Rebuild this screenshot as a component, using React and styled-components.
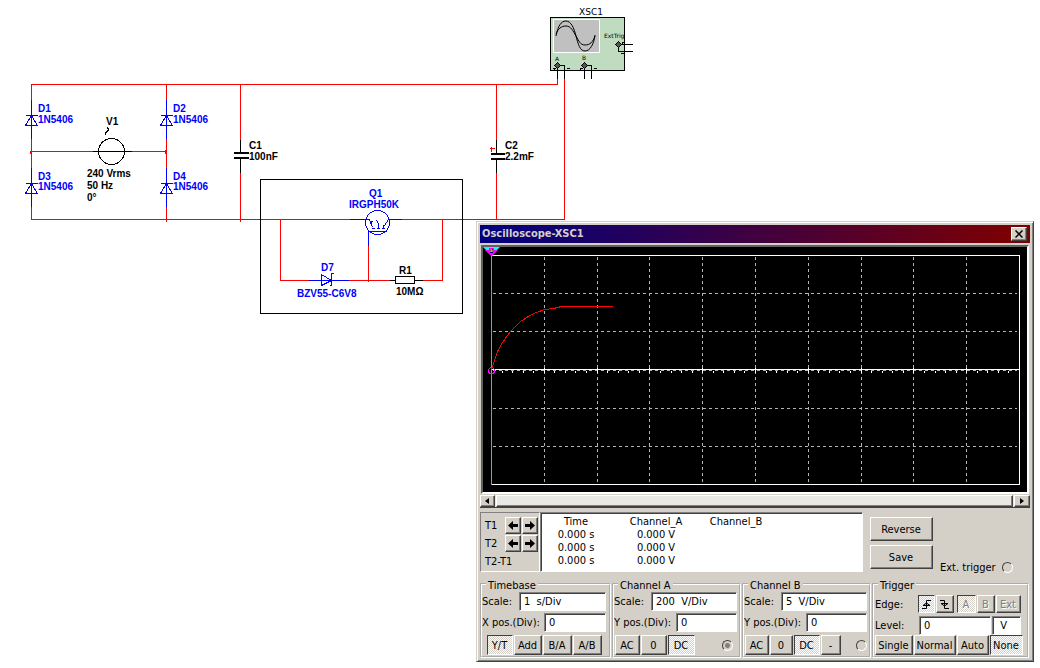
import React from "react";
import styled, { createGlobalStyle, css } from "styled-components";

const FACE = "#d4d0c8";
const RED = "#ff0000";
const BLUE = "#0000ff";

const GlobalStyle = createGlobalStyle`
  * { box-sizing: border-box; }
  body {
    margin: 0;
    background: #fff;
    color: #000;
    font-family: "DejaVu Sans Condensed", "DejaVu Sans", sans-serif;
    font-size: 11px;
    line-height: 13px;
  }
`;

const raised = css`
  border: 1px solid;
  border-color: #fff #404040 #404040 #fff;
  box-shadow: inset -1px -1px #808080;
`;

const sunken = css`
  border: 1px solid;
  border-color: #808080 #fff #fff #808080;
  box-shadow: inset 1px 1px #404040;
`;

const Desktop = styled.main`
  position: relative;
  min-height: 100vh;
`;

const Schematic = styled.svg`
  display: block;
  width: 100%;
  height: 320px;
  text {
    font: bold 10px "Liberation Sans", Arial, sans-serif;
  }
  .blue { fill: ${BLUE}; }
  .name { font: 9px "DejaVu Sans", sans-serif; }
  .tiny { font: 6px "DejaVu Sans", sans-serif; }
`;

const Window = styled.section`
  position: absolute;
  top: 221px;
  left: 476px;
  right: 6px;
  min-width: 556px;
  padding: 3px;
  background: ${FACE};
  border: 1px solid;
  border-color: ${FACE} #404040 #404040 ${FACE};
  box-shadow: inset 1px 1px #fff, inset -1px -1px #808080;
`;

const TitleBar = styled.header`
  display: flex;
  align-items: center;
  justify-content: space-between;
  height: 18px;
  padding: 0 3px 0 2px;
  background: linear-gradient(to right, #000080, #800000);
  color: ${FACE};
`;

const Title = styled.h1`
  margin: 0;
  font-size: 11px;
  line-height: 18px;
`;

const Button = styled.button`
  display: flex;
  align-items: center;
  justify-content: center;
  width: ${(p) => p.$w}px;
  height: ${(p) => p.$h || 20}px;
  padding: 0 1px 0 0;
  background: ${FACE};
  color: #000;
  font: inherit;
  ${raised}
  ${(p) =>
    p.$pressed &&
    css`
      border-color: #404040 #fff #fff #404040;
      box-shadow: none;
      background: repeating-conic-gradient(#fff 0 25%, ${FACE} 0 50%) 0 0 / 2px 2px;
    `}
  &:disabled {
    color: #808080;
    text-shadow: 1px 1px #fff;
  }
`;

const Display = styled.div`
  margin: 2px 1px 0;
  border: 2px solid;
  border-color: #606060 #fff #fff #606060;
  background: #000;
`;

const Graph = styled.svg`
  display: block;
  width: 100%;
`;

const ScrollBar = styled.div`
  display: flex;
  height: 13px;
  margin-top: 1px;
  background: #eae8e3;
  border-bottom: 1px solid #404040;
`;

const Thumb = styled.div`
  flex: 1;
  margin: 0 1px;
  ${raised}
`;

const Readout = styled.div`
  display: flex;
  height: 60px;
  margin-top: 4px;
`;

const Cursors = styled.div`
  display: grid;
  grid-template-columns: 19px 16px 16px;
  grid-template-rows: 17px 17px 16px;
  column-gap: 1px;
  row-gap: 1px;
  flex: 0 0 60px;
  padding: 4px 0 0 4px;
  border: 1px solid;
  border-color: #808080 #fff #fff #808080;
`;

const CursorName = styled.span`
  align-self: center;
  white-space: nowrap;
`;

const Listing = styled.div`
  flex: 0 1 323px;
  padding: 2px 1px 1px;
  background: #fff;
  ${sunken}
`;

const Values = styled.table`
  table-layout: fixed;
  border-collapse: collapse;
  th, td {
    padding: 0;
    height: 13px;
    font-weight: normal;
    text-align: center;
  }
`;

const Col = styled.col`
  width: ${(p) => p.$w}px;
`;

const Actions = styled.div`
  display: flex;
  flex-direction: column;
  gap: 4px;
  padding: 5px 7px 0;
`;

const RadioLabel = styled.label`
  display: flex;
  align-items: center;
  align-self: flex-end;
  gap: 6px;
  height: 10px;
`;

const Radio = styled.input`
  appearance: none;
  width: 11px;
  height: 11px;
  margin: 0;
  border: 1px solid;
  border-color: #404040 #fff #fff #404040;
  border-radius: 50%;
  background: ${FACE};
  &:checked {
    background: radial-gradient(#808080 0 2px, ${FACE} 3px);
  }
`;

const Groups = styled.div`
  display: grid;
  grid-template-columns: 131fr 129fr 129fr 157fr;
  column-gap: 1px;
  margin: 4px 1px 0 0;
`;

const Group = styled.fieldset`
  min-width: 0;
  margin: 0;
  padding: 0 2px 1px 0;
  border: 2px groove #fff;
`;

const Legend = styled.legend`
  margin-left: 4px;
  padding: 4px 2px 0;
  line-height: 12px;
`;

const Rows = styled.div`
  display: flex;
  flex-direction: column;
  gap: ${(p) => (p.$trigger ? 0 : 2)}px;
`;

const FieldRow = styled.div`
  display: flex;
  align-items: center;
  justify-content: space-between;
  padding-left: ${(p) => p.$indent || 0}px;
  padding-right: ${(p) => p.$inset || 0}px;
`;

const EdgeRow = styled(FieldRow)`
  height: 24px;
`;

const Name = styled.label`
  flex: 1;
  white-space: nowrap;
`;

const TextBox = styled.input`
  width: ${(p) => p.$w}px;
  height: 19px;
  padding: 0 4px;
  border-radius: 0;
  background: #fff;
  color: #000;
  font: inherit;
  ${sunken}
`;

const ButtonRow = styled.div`
  display: flex;
  gap: 1px;
  padding-left: ${(p) => p.$indent}px;
  margin-top: ${(p) => (p.$flush ? 0 : 1)}px;
`;

const Pair = styled.div`
  display: flex;
  gap: 1px;
  margin-right: ${(p) => p.$after || 0}px;
`;

const RadioSlot = styled.div`
  display: flex;
  align-items: center;
  margin-left: auto;
  padding-right: ${(p) => p.$inset || 0}px;
`;

function Diode({ x, y }) {
  return (
    <path
      d={`M${x} ${y - 16}V${y + 23}M${x - 6} ${y}H${x + 6}M${x} ${y}L${x - 6} ${y + 10}H${x + 6}Z`}
      stroke={BLUE}
    />
  );
}

function Terminal({ x, y }) {
  return (
    <path d={`M${x - 3} ${y}L${x} ${y - 3}L${x + 3} ${y}L${x} ${y + 3}Z`} fill="#555" stroke="#000" />
  );
}

function Circuit() {
  return (
    <Schematic role="img" aria-label="Rectifier circuit with oscilloscope XSC1">
      <g transform="translate(.5 .5)" fill="none" strokeWidth="1" shapeRendering="crispEdges">
        <rect x="550" y="17" width="74" height="53" fill="#c0dcc0" stroke="#000" />
        <rect x="553" y="19" width="46" height="33" fill="#c0c0c0" stroke="#fff" />
        <g stroke={RED}>
          <path d="M31 219V84H557V78M564 78V219H31M166 84V219M240 84V219M496 84V219M31 151H166" />
          <path d="M280 219V280H442V219M368 244V281" />
          <path d="M165 84H168M166 83V86M239 84H242M240 83V86M165 219H168M166 218V221M239 219H242M240 218V221M30 150V153M29 151H31M165 150V153M164 150H166" />
          <path d="M491 146V151M489 148H494M496 83V85M280 218V220M442 218V220" />
        </g>
        <Diode x={31} y={115} />
        <Diode x={166} y={115} />
        <Diode x={31} y={183} />
        <Diode x={166} y={183} />
        <g stroke="#000">
          <path d="M92 151H131" />
          <circle cx="111" cy="151" r="13" fill="#fff" />
          <path d="M98 151H125" />
          <path d="M107 127L108 129L107 131L105 132V134" />
          <path d="M240 139V152M240 158V172M496 139V152M496 159V172" />
          <rect x="237" y="154" width="6" height="2" fill="#fff" stroke="#fff" />
          <rect x="493" y="155" width="6" height="2" fill="#fff" stroke="#fff" />
          <path d="M233 152H248M233 153H248M233 157H248M233 158H248M490 153H504M490 154H504M490 158H504M490 159H504" />
          <rect x="260" y="179" width="202" height="134" />
          <path d="M389 280H422" />
          <rect x="395" y="276" width="19" height="7" fill="#fff" />
        </g>
        <rect x="370" y="217" width="17" height="4" fill="#fff" stroke="#fff" />
        <g stroke={BLUE}>
          <circle cx="377" cy="222" r="12" />
          <path d="M349 219H369L372 227M401 219H388L382 228M376 220L378 223V227" />
          <path d="M371 228H374M376 228H379M381 228H384M369 221H372M369 220L372 223M383 224V227M367 231H386M368 231V245" />
          <path d="M308 280H348M321 274V285L331 280ZM331 273V285M333 273H331V285H329" />
        </g>
        <g stroke="#000">
          <path d="M557 65V78M557 65H564V78M584 65V78M584 65H591V78M618 44H632M618 44V51H632" />
          <path d="M552 68H555M566 68H569M579 68H582M593 68H596M621 42H624M620 53H623M622 41V43M554 67V69M580 67V69" />
        </g>
        <Terminal x={557} y={65} />
        <Terminal x={584} y={65} />
        <Terminal x={618} y={44} />
      </g>
      <g fill="none" stroke="#000" strokeWidth="1">
        <path d="M556 36C558 26 561 21 566 21S574 28 576 36S580 51 585 51S594 44 595 35" />
        <path d="M556 34C558 29 561 26 566 26S573 31 576 36S580 45 585 45S593 42 595 36" />
      </g>
      <g className="blue">
        <text x="38" y="112">D1</text>
        <text x="38" y="123">1N5406</text>
        <text x="173" y="112">D2</text>
        <text x="173" y="123">1N5406</text>
        <text x="38" y="180">D3</text>
        <text x="38" y="190">1N5406</text>
        <text x="173" y="180">D4</text>
        <text x="173" y="190">1N5406</text>
        <text x="369" y="197">Q1</text>
        <text x="349" y="208">IRGPH50K</text>
        <text x="321" y="271">D7</text>
        <text x="297" y="297">BZV55-C6V8</text>
      </g>
      <text x="106" y="125">V1</text>
      <text x="87" y="177">240 Vrms</text>
      <text x="87" y="189">50 Hz</text>
      <text x="87" y="201">0°</text>
      <text x="249" y="149">C1</text>
      <text x="249" y="160">100nF</text>
      <text x="505" y="149">C2</text>
      <text x="505" y="160">2.2mF</text>
      <text x="399" y="274">R1</text>
      <text x="396" y="295">10MΩ</text>
      <text className="name" x="579" y="15">XSC1</text>
      <text className="tiny" x="604" y="38">ExtTrig</text>
      <text className="tiny" x="555" y="61">A</text>
      <text className="tiny" x="582" y="60">B</text>
    </Schematic>
  );
}

const GRID_X = [61, 114, 166, 219, 272, 325, 378, 430, 483];
const GRID_Y = [46, 84, 123, 161, 199];
const TICKS = Array.from({ length: 50 }, (_, i) => 8 + Math.round(i * 10.56));

function Trace() {
  return (
    <Graph viewBox="0 0 544 245" role="img" aria-label="Channel A trace">
      <g transform="translate(.5 .5)" fill="none" shapeRendering="crispEdges">
        <g stroke="#b4b4b4" strokeDasharray="3 3">
          {GRID_X.map((x) => (
            <path key={x} d={`M${x} 9V237`} />
          ))}
          {GRID_Y.map((y) => (
            <path key={y} d={`M9 ${y}H533`} />
          ))}
        </g>
        <g stroke="#fff">
          <path d="M8 8H536V237H8M8 122H536" />
          {TICKS.map((x) => (
            <path key={x} d={`M${x} 123V125`} />
          ))}
          {GRID_X.map((x) => (
            <path key={x} d={`M${x} 120V125`} />
          ))}
        </g>
        <path d="M8 8V237" stroke="#00ff00" />
        <circle cx="8" cy="123" r="3" stroke="#ff00ff" />
        <path d="M8 122L11 113L14 104L19 95L27 84L37 74L48 67L61 62L70 61L78 59H129" stroke={RED} />
      </g>
      <path d="M0 0H17L14 3H3Z" fill="#00ffff" />
      <path d="M2 3H6V1H11V3H15L9 9H8Z" fill="#ff00ff" />
      <path d="M7 2H10V6H7Z" fill="#000080" />
      <path d="M8 2V5M8 4H10" stroke="#ffff00" />
    </Graph>
  );
}

function Arrow({ flip }) {
  return (
    <svg width="10" height="9" viewBox="0 0 10 9" aria-hidden="true">
      <path d={flip ? "M10 4.500L5 0V3H0V6H5V9Z" : "M0 4.500L5 0V3H10V6H5V9Z"} />
    </svg>
  );
}

function SmallArrow({ flip }) {
  return (
    <svg width="4" height="6" viewBox="0 0 4 6" aria-hidden="true">
      <path d={flip ? "M4 3L0 0V6Z" : "M0 3L4 0V6Z"} />
    </svg>
  );
}

function Edge({ falling }) {
  return (
    <svg width="11" height="11" viewBox="0 0 11 11" fill="none" stroke="#000" aria-hidden="true">
      {falling ? (
        <path d="M1 1.500H5.500V9.500H10M2 4.500L5.500 7L9 4.500M2 4.500H9" />
      ) : (
        <path d="M1 9.500H5.500V1.500H10M2 6.500L5.500 4L9 6.500M2 6.500H9" />
      )}
    </svg>
  );
}

function Field({ id, name, value, w, inset }) {
  return (
    <FieldRow $inset={inset}>
      <Name htmlFor={id}>{name}</Name>
      <TextBox id={id} $w={w} defaultValue={value} />
    </FieldRow>
  );
}

export default function App() {
  return (
    <Desktop>
      <GlobalStyle />
      <Circuit />
      <Window aria-label="Oscilloscope-XSC1">
        <TitleBar>
          <Title>Oscilloscope-XSC1</Title>
          <Button $w={16} $h={14} aria-label="Close">
            <svg width="8" height="8" viewBox="0 0 8 8" stroke="#000" strokeWidth="1.500" aria-hidden="true">
              <path d="M0.500 0.500L7.500 7.500M7.500 0.500L0.500 7.500" />
            </svg>
          </Button>
        </TitleBar>
        <Display>
          <Trace />
        </Display>
        <ScrollBar>
          <Button $w={15} $h={12} aria-label="Scroll left"><SmallArrow /></Button>
          <Thumb />
          <Button $w={16} $h={12} aria-label="Scroll right"><SmallArrow flip /></Button>
        </ScrollBar>

        <Readout>
          <Cursors>
            <CursorName>T1</CursorName>
            <Button $w={16} $h={17} aria-label="T1 left"><Arrow /></Button>
            <Button $w={16} $h={17} aria-label="T1 right"><Arrow flip /></Button>
            <CursorName>T2</CursorName>
            <Button $w={16} $h={17} aria-label="T2 left"><Arrow /></Button>
            <Button $w={16} $h={17} aria-label="T2 right"><Arrow flip /></Button>
            <CursorName>T2-T1</CursorName>
          </Cursors>
          <Listing>
            <Values>
              <colgroup>
                <Col $w={68} />
                <Col $w={92} />
                <Col $w={68} />
              </colgroup>
              <thead>
                <tr><th>Time</th><th>Channel_A</th><th>Channel_B</th></tr>
              </thead>
              <tbody>
                {["T1", "T2", "T2-T1"].map((row) => (
                  <tr key={row}><td>0.000 s</td><td>0.000 V</td><td /></tr>
                ))}
              </tbody>
            </Values>
          </Listing>
          <Actions>
            <Button $w={63} $h={24}>Reverse</Button>
            <Button $w={63} $h={24}>Save</Button>
          </Actions>
          <RadioLabel>
            Ext. trigger
            <Radio type="radio" name="trigger-source" />
          </RadioLabel>
        </Readout>

        <Groups>
          <Group>
            <Legend>Timebase</Legend>
            <Rows>
              <Field id="tb-scale" name="Scale:" value="1  s/Div" w={87} inset={1} />
              <Field id="tb-pos" name="X pos.(Div):" value="0" w={62} inset={1} />
              <ButtonRow $indent={5}>
                <Button $w={26} $pressed>Y/T</Button>
                <Button $w={28}>Add</Button>
                <Button $w={29}>B/A</Button>
                <Button $w={29}>A/B</Button>
              </ButtonRow>
            </Rows>
          </Group>
          <Group>
            <Legend>Channel A</Legend>
            <Rows>
              <Field id="a-scale" name="Scale:" value="200  V/Div" w={86} />
              <Field id="a-pos" name="Y pos.(Div):" value="0" w={61} />
              <ButtonRow $indent={1}>
                <Button $w={25}>AC</Button>
                <Button $w={26}>0</Button>
                <Button $w={27} $pressed>DC</Button>
                <RadioSlot $inset={4}>
                  <Radio type="radio" name="channel" aria-label="Channel A" defaultChecked />
                </RadioSlot>
              </ButtonRow>
            </Rows>
          </Group>
          <Group>
            <Legend>Channel B</Legend>
            <Rows>
              <Field id="b-scale" name="Scale:" value="5  V/Div" w={86} />
              <Field id="b-pos" name="Y pos.(Div):" value="0" w={61} />
              <ButtonRow $indent={1}>
                <Button $w={24}>AC</Button>
                <Button $w={23}>0</Button>
                <Button $w={26} $pressed>DC</Button>
                <Button $w={20}>-</Button>
                <RadioSlot>
                  <Radio type="radio" name="channel" aria-label="Channel B" />
                </RadioSlot>
              </ButtonRow>
            </Rows>
          </Group>
          <Group>
            <Legend>Trigger</Legend>
            <Rows $trigger>
              <EdgeRow $indent={1} $inset={4}>
                <Name as="span">Edge:</Name>
                <Pair $after={3}>
                  <Button $w={17} $h={18} $pressed aria-label="Rising edge"><Edge /></Button>
                  <Button $w={18} $h={18} aria-label="Falling edge"><Edge falling /></Button>
                </Pair>
                <Pair>
                  <Button $w={19} $h={18} $pressed disabled>A</Button>
                  <Button $w={18} $h={18} disabled>B</Button>
                  <Button $w={25} $h={18} disabled>Ext</Button>
                </Pair>
              </EdgeRow>
              <FieldRow $indent={1} $inset={4}>
                <Name htmlFor="level">Level:</Name>
                <Pair>
                  <TextBox id="level" $w={72} defaultValue="0" />
                  <TextBox $w={29} defaultValue=" V" aria-label="Level unit" />
                </Pair>
              </FieldRow>
              <ButtonRow $indent={1} $flush>
                <Button $w={38}>Single</Button>
                <Button $w={42}>Normal</Button>
                <Button $w={32}>Auto</Button>
                <Button $w={33} $pressed>None</Button>
              </ButtonRow>
            </Rows>
          </Group>
        </Groups>
      </Window>
    </Desktop>
  );
}
